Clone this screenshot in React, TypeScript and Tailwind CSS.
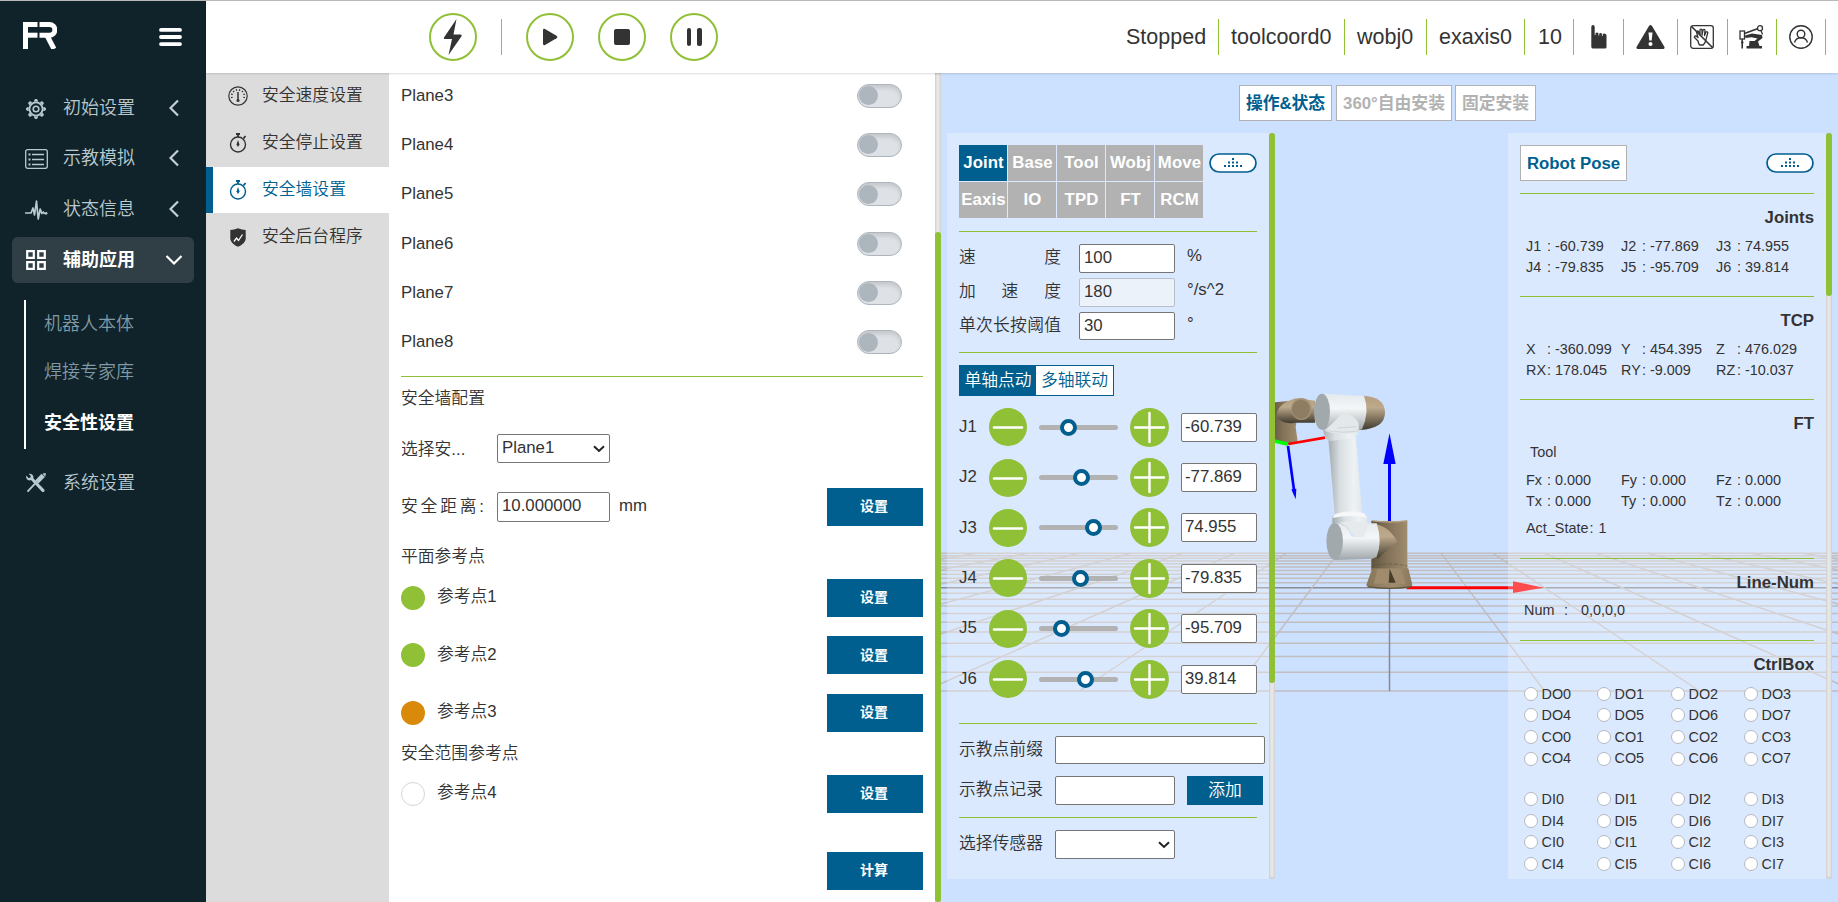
import React from "react";

const menuText = "text-[18px] leading-none";

function Gear() {
  return (
    <svg width="20" height="20" viewBox="0 0 20 20" fill="none" stroke="#b9c9d0">
      <circle cx="10" cy="10" r="6.6" strokeWidth="1.9" />
      <circle cx="10" cy="10" r="2.8" strokeWidth="1.6" />
      {[0, 45, 90, 135, 180, 225, 270, 315].map((a) => (
        <path key={a} d="M8.4 2.6 L9 .6 H11 L11.6 2.6" fill="#b9c9d0" strokeWidth="1" transform={`rotate(${a} 10 10)`} />
      ))}
    </svg>
  );
}
function ListIcon() {
  return (
    <svg width="23" height="20" viewBox="0 0 23 20" fill="none" stroke="#b9c9d0" strokeWidth="1.3">
      <rect x=".7" y=".7" width="21.6" height="18.6" rx="2" />
      <path d="M7 5.5h12M7 10.500h12M7 15.500h12" />
      <path d="M3.5 5.5h2M3.5 10.500h2M3.5 15.500h2" strokeWidth="2" />
    </svg>
  );
}
function Pulse() {
  return (
    <svg width="23" height="20" viewBox="0 0 23 20" fill="none" stroke="#b9c9d0" strokeWidth="1.7" strokeLinejoin="round">
      <path d="M0 13h6l2-5 1.5 7L11.5 1l1.7 18 2-10 1.6 4.5 1.5-1.5 1 1.5H22" />
      <circle cx="21.2" cy="13.3" r="1.2" fill="#b9c9d0" stroke="none" />
    </svg>
  );
}
function Squares() {
  return (
    <svg width="20" height="20" viewBox="0 0 20 20" fill="none" stroke="#fff" strokeWidth="2.200">
      <path d="M1.200 1.200h6.600v6.600H1.200zM12.200 1.200h6.600v6.600h-6.600zM1.200 12.200h6.600v6.600H1.200zM12.200 12.200h6.600v6.600h-6.600z" />
    </svg>
  );
}
function Tools() {
  return (
    <svg width="20" height="20" viewBox="0 0 20 20" fill="none" stroke="#b9c9d0">
      <path d="M.3 2.500c-.5 2 .2 3.600 1.500 4.400 1 .6 2.200.6 3.200.2L16 18.800c1.400 1 3.200-.6 2.300-2.200L7.300 5.300C7.700 3.800 7.200 2.300 6 1.400 5 .7 3.800.6 2.800 1l2 2-.5 1.700-1.800.4z" fill="#b9c9d0" stroke="none" />
      <path d="M1.500 18.700l7.500-8" strokeWidth="1.900" />
      <path d="M10.800 9l6.400-6.700" strokeWidth="4.600" />
      <path d="M17 .8l2.500-.5-.4 3z" fill="#b9c9d0" strokeWidth=".6" />
    </svg>
  );
}
function Chev({ down = false }: { down?: boolean }) {
  return down ? (
    <svg width="18" height="12" viewBox="0 0 18 12" fill="none" stroke="#fff" strokeWidth="2.200">
      <path d="M1.500 2l7.500 7.500L16.500 2" />
    </svg>
  ) : (
    <svg width="10" height="18" viewBox="0 0 10 18" fill="none" stroke="#c3d0d6" strokeWidth="2.200">
      <path d="M9 1.500L1.500 9 9 16.500" />
    </svg>
  );
}

function Sidebar() {
  const top = [
    { t: "初始设置", i: <Gear /> },
    { t: "示教模拟", i: <ListIcon /> },
    { t: "状态信息", i: <Pulse /> },
  ];
  return (
    <aside className="flex h-full w-[206px] shrink-0 flex-col bg-[#10232a]">
      <div className="flex h-[85px] items-start pl-[23px] pt-[21px]">
        <svg width="34" height="27" viewBox="0 0 34 27" fill="none" stroke="#fff" strokeWidth="5">
          <path d="M2.500 27V2.500H14.500" />
          <path d="M4.500 13.200H14.500" />
          <path d="M16.500 2.500H26.500a5.300 5.300 0 0 1 0 10.700H16.500" />
          <path d="M24 13.500L31 27" />
          <path d="M5 8.200H28" stroke="#10232a" strokeWidth=".8" />
        </svg>
        <svg className="ml-[102px] mt-[6px]" width="23" height="18" viewBox="0 0 23 18" stroke="#fff" strokeWidth="3.800" strokeLinecap="round">
          <path d="M2 1.900h19M2 9h19M2 16.100h19" />
        </svg>
      </div>
      {top.map((m) => (
        <div key={m.t} className="mx-3 flex h-[50.400px] items-start text-[#b9c9d0]">
          <div className="flex h-[46px] w-full items-center pl-3">
            <span className="flex w-6 justify-center">{m.i}</span>
            <span className={`${menuText} -mt-[2px] ml-[15px] w-[100px]`}>{m.t}</span>
            <span className="ml-[6px] -mt-[2px]"><Chev /></span>
          </div>
        </div>
      ))}
      <div className="mx-3 flex h-[46px] items-center rounded-md bg-[#303f45] pl-3 font-bold text-white">
        <span className="flex w-6 justify-center"><Squares /></span>
        <span className={`${menuText} -mt-px ml-[15px] w-[100px]`}>辅助应用</span>
        <span className="-mt-px ml-[2px]"><Chev down /></span>
      </div>
      <div className="ml-6 mt-[17px] flex h-[149px] flex-col border-l-2 border-white pl-[18px] text-[#7f99a5]">
        <span className={`${menuText} flex h-[47px] items-center`}>机器人本体</span>
        <span className={`${menuText} flex h-[50px] items-center`}>焊接专家库</span>
        <span className={`${menuText} flex h-[51px] items-center font-bold text-white`}>安全性设置</span>
      </div>
      <div className="mx-3 mt-[11px] flex h-[46px] items-center pl-3 text-[#b9c9d0]">
        <span className="flex w-6 justify-center"><Tools /></span>
        <span className={`${menuText} ml-[15px]`}>系统设置</span>
      </div>
    </aside>
  );
}

function RoundBtn({ children }: { children: React.ReactNode }) {
  return <button className="flex size-12 items-center justify-center rounded-full border-2 border-[#8fc036]">{children}</button>;
}

function Header() {
  const cell = "flex h-9 items-center border-r border-[#8fc036]";
  return (
    <header className="relative z-10 flex h-[72px] shrink-0 items-start bg-white shadow-[0_1px_2px_rgba(0,0,0,0.14)]">
      <div className="flex items-center pl-[223px] pt-3">
        <RoundBtn>
          <svg width="20" height="36" viewBox="0 0 20 36" fill="#333"><path d="M13.500 0L1 18.500q-.8 1.500 1 1.500h7L5.500 36 18.500 17.200q.8-1.700-1-1.700H10.500z" /></svg>
        </RoundBtn>
        <div className="mx-6 h-9 w-px bg-[#8fc036]" />
        <div className="flex gap-6">
          <RoundBtn>
            <svg width="16" height="18" viewBox="0 0 16 18" fill="#333"><path d="M1 2.200Q1 .2 3 1L14.500 7.800q1.700 1.200 0 2.400L3 17q-2 .8-2-1.200z" /></svg>
          </RoundBtn>
          <RoundBtn><span className="h-4 w-4 rounded-[2px] bg-[#333]" /></RoundBtn>
          <RoundBtn><span className="flex gap-[6px]"><i className="h-[18px] w-[4.500px] rounded-[2px] bg-[#333]" /><i className="h-[18px] w-[4.500px] rounded-[2px] bg-[#333]" /></span></RoundBtn>
        </div>
      </div>
      <div className="ml-auto mr-[12px] flex pt-[18px] text-[21.500px] leading-none text-[#333]">
        <span className={`${cell} w-[104px] pl-[11px] pt-px`}>Stopped</span>
        <span className={`${cell} w-[126px] pl-3 pt-px`}>toolcoord0</span>
        <span className={`${cell} w-[82px] pl-3 pt-px`}>wobj0</span>
        <span className={`${cell} w-[98px] pl-3 pt-px`}>exaxis0</span>
        <span className={`${cell} w-[49px] pl-[13px] pt-px`}>10</span>
        <span className={`${cell} w-[50px] pl-[17px]`}>
          <svg width="16" height="24" viewBox="0 0 16 24" fill="#333">
            <path d="M.3 2q0-2 1.700-2t1.700 2v8h.8V8q1.500-1 2.900 0v2.500h.8V8.500q1.400-1 2.700 0v2.500h.8V9q1.500-1 3 0 .8.700.8 1.500V22q0 1.500-1.500 1.500h-12q-1.500 0-1.700-1.500z" />
          </svg>
        </span>
        <span className={`${cell} w-[54px] justify-center`}>
          <svg width="29" height="24" viewBox="0 0 29 24" fill="#333">
            <path d="M14.500 0q.9 0 1.500 1L28.500 22q.5 1.700-1 2h-26q-1.500-.3-1-2L13 1q.6-1 1.500-1z" />
            <path d="M12.500 7.500h4l-.8 8h-2.400z" fill="#fff" /><circle cx="14.500" cy="19" r="2" fill="#fff" />
          </svg>
        </span>
        <span className={`${cell} w-[50px] justify-center pr-px`}>
          <svg width="24" height="24" viewBox="0 0 24 24" fill="none" stroke="#333" strokeWidth="1.300" strokeLinecap="round" strokeLinejoin="round">
            <rect x=".7" y=".7" width="22.600" height="22.600" rx="2.500" />
            <path d="M8 16L4.500 12.500q-.4-1.700 1.500-1.500l2 1.600L6.500 7q.5-1.600 2-.6L10 10V4.800q1-1.500 2 0V10l1-5q1.200-1.300 2 .2L14.500 10.500l1.500-3.500q1.500-.8 1.800.7l-1.600 6q-.5 4-3 6.300H9.500q-1-1.500-1.500-4z" />
            <path d="M1.500 1.500l21 21" strokeWidth="1.600" />
          </svg>
        </span>
        <span className={`${cell} w-[49px] justify-center pr-px`}>
          <svg width="25" height="24" viewBox="0 0 25 24" fill="none" stroke="#333">
            <rect x="1" y="6" width="4.500" height="8" strokeWidth="1.300" />
            <path d="M3.200 14v9.500M2 17.500h2.500" strokeWidth="1.600" />
            <path d="M5.500 8.500L19 3.500" strokeWidth="1.500" />
            <circle cx="21" cy="3.200" r="2.500" strokeWidth="1.300" /><path d="M22 5.500l1.500 4" strokeWidth="1.300" />
            <path d="M6 10.500l7-2 10 1.500.5 3L19 16.500l1.500 4.500h2.500v2.500H7.500V21H10l.5-5h5l3-2.500-6-1.300-6 .8z" fill="#333" stroke="none" />
          </svg>
        </span>
        <span className={`${cell} w-[49px] justify-center`}>
          <svg width="24" height="24" viewBox="0 0 24 24" fill="none" stroke="#333" strokeWidth="1.400">
            <circle cx="12" cy="12" r="11.200" /><circle cx="12" cy="9" r="3.800" /><path d="M5.500 17.500q1.500-4.700 6.500-4.700t6.500 4.700" />
          </svg>
        </span>
      </div>
    </header>
  );
}

function Stopwatch({ c }: { c: string }) {
  return (
    <svg width="18" height="20" viewBox="0 0 18 20" fill="none" stroke={c} strokeWidth="1.400">
      <circle cx="9" cy="11.500" r="7.500" />
      <path d="M9 1v3M7 1h4M14.500 5.500L16.500 3" strokeWidth="1.800" />
      <path d="M9 7l1.500 4.500L9 14l-1.500-2.500z" fill={c} stroke="none" />
    </svg>
  );
}
function Gauge() {
  return (
    <svg width="20" height="20" viewBox="0 0 20 20" fill="none" stroke="#333" strokeWidth="1.200">
      <circle cx="10" cy="10" r="9.200" />
      <path d="M4 12a6.300 6.300 0 1 1 12 0" strokeWidth="1.700" strokeDasharray="1.200 2" />
      <path d="M10 6v8" strokeWidth="1.500" /><circle cx="10" cy="14.500" r="1.500" fill="#333" stroke="none" />
    </svg>
  );
}
function Shield() {
  return (
    <svg width="16" height="19" viewBox="0 0 16 19">
      <path d="M8 .3Q12 2 15.700 2v9Q15 16 8 18.700 1 16 .3 11V2Q4 2 8 .3z" fill="#333" />
      <path d="M4 13.500l2.500-3.500 2 2.500L12.500 6.500" stroke="#fff" strokeWidth="1.300" fill="none" />
    </svg>
  );
}

function SubMenu() {
  const items = [
    { t: "安全速度设置", i: <Gauge /> },
    { t: "安全停止设置", i: <Stopwatch c="#333" /> },
    { t: "安全墙设置", i: <Stopwatch c="#005f8e" />, on: true },
    { t: "安全后台程序", i: <Shield /> },
  ];
  return (
    <nav className="flex w-[183px] shrink-0 flex-col gap-px bg-[#dcdcdc] text-[16.800px] leading-none text-[#333]">
      {items.map((m) => (
        <div key={m.t} className={m.on ? "flex h-[46px] items-center border-l-[7px] border-[#005f8e] bg-white text-[#005f8e]" : "flex h-[46px] items-center border-l-[7px] border-transparent"}>
          <span className="ml-[13px] flex w-6 justify-center">{m.i}</span>
          <span className="ml-3">{m.t}</span>
        </div>
      ))}
    </nav>
  );
}

function Action({ label }: { label: string }) {
  return <button className="ml-auto h-[38px] w-24 bg-[#005f8e] pb-px pr-[2px] text-[14px] font-bold leading-none text-white">{label}</button>;
}

const field = "rounded-[2px] border border-[#767676] bg-white leading-none outline-none";

function Picker({ value, size }: { value: string; size: string }) {
  return (
    <span className={`relative flex h-[29px] shrink-0 ${size}`}>
      <select className={`${field} h-full w-full appearance-none pl-1`} defaultValue={value}>
        <option>{value}</option>
      </select>
      <svg className="pointer-events-none absolute right-[5px] top-[11px]" width="12" height="8" viewBox="0 0 12 8" fill="none" stroke="#222" strokeWidth="2">
        <path d="M1 1.300l5 4.700 5-4.700" />
      </svg>
    </span>
  );
}

function RefRow({ n, color }: { n: number; color: string }) {
  return (
    <div className="flex h-[42px] items-center">
      <span className={`size-6 rounded-full ${color}`} />
      <span className="ml-3">参考点{n}</span>
      <Action label="设置" />
    </div>
  );
}

function WallPanel() {
  return (
    <section className="flex w-[552px] shrink-0 overflow-hidden bg-white text-[16.800px] leading-none text-[#333]">
      <div className="flex w-[546px] flex-col pl-3 pr-3">
        <div className="-mt-[2px] flex flex-col">
          {[3, 4, 5, 6, 7, 8].map((n) => (
            <div key={n} className="flex h-[49.300px] shrink-0 items-center justify-between pr-[21px]">
              <span className="mt-px">Plane{n}</span>
              <span className="flex h-6 w-[45px] items-center rounded-full border border-[#adb5bd] bg-[#dee2e6] pl-px shadow-[inset_0_3px_4px_rgba(0,0,0,0.12)]">
                <i className="size-[19px] rounded-full bg-[#adb5bd]" />
              </span>
            </div>
          ))}
        </div>
        <div className="mt-[9px] h-px shrink-0 bg-[#8fc036]" />
        <div className="flex h-[42px] items-center pt-[3px]">安全墙配置</div>
        <div className="flex h-[60px] items-center">
          <span className="mt-[3px] w-24">选择安...</span>
          <Picker value="Plane1" size="w-[113px]" />
        </div>
        <div className="flex h-[56px] items-center">
          <span className="mt-px w-24 tracking-[2.800px]">安全距离:</span>
          <input className={`${field} h-[30px] w-[113px] pb-px pl-1`} defaultValue="10.000000" />
          <span className="-mt-px ml-[9px]">mm</span>
          <Action label="设置" />
        </div>
        <div className="flex h-[42px] items-center pt-[3px]">平面参考点</div>
        <div className="flex flex-col gap-[15.500px]">
          <RefRow n={1} color="bg-[#8fc036]" />
          <RefRow n={2} color="bg-[#8fc036]" />
          <RefRow n={3} color="bg-[#d98a0b]" />
        </div>
        <div className="flex h-[39px] items-center pt-[3px]">安全范围参考点</div>
        <RefRow n={4} color="border border-[#d6d6d6] bg-white" />
        <div className="mt-[37px] flex"><Action label="计算" /></div>
      </div>
      <div className="flex w-[6px] flex-col bg-[#e9e9e9] shadow-[inset_0_0_3px_rgba(0,0,0,0.25)]">
        <div className="mt-[159px] flex-1 rounded-[3px] bg-[#8fc036]" />
      </div>
    </section>
  );
}

const CX = 1389.5;
const HY = 484.4;
function Scene() {
  const idx = Array.from({ length: 21 }, (_, i) => i - 10);
  return (
    <svg className="absolute inset-0" width="897" height="829" viewBox="941 73 897 829">
      <defs>
        <linearGradient id="wv" x1="0" y1="0" x2="0" y2="1"><stop offset="0" stopColor="#e4e9ec" /><stop offset=".4" stopColor="#f4f7f8" /><stop offset="1" stopColor="#9fa6aa" /></linearGradient>
        <linearGradient id="wh" x1="0" y1="0" x2="1" y2="0"><stop offset="0" stopColor="#a4abaf" /><stop offset=".35" stopColor="#d9dfe2" /><stop offset=".75" stopColor="#eef2f4" /><stop offset="1" stopColor="#e2e7ea" /></linearGradient>
        <linearGradient id="bv" x1="0" y1="0" x2="0" y2="1"><stop offset="0" stopColor="#b59f80" /><stop offset=".35" stopColor="#bda98b" /><stop offset="1" stopColor="#3f3a2e" /></linearGradient>
        <linearGradient id="bh" x1="0" y1="0" x2="1" y2="0"><stop offset="0" stopColor="#5f543f" /><stop offset=".5" stopColor="#85745a" /><stop offset="1" stopColor="#a08c6e" /></linearGradient>
        <linearGradient id="cone" x1="0" y1="0" x2="1" y2="0"><stop offset="0" stopColor="#877559" /><stop offset=".6" stopColor="#a08b6c" /><stop offset="1" stopColor="#8a795e" /></linearGradient>
      </defs>
      <g stroke="#c2bebf" strokeWidth="1.500">
        {idx.map((n) => {
          const y = HY + (103.3 * 20) / (20 - n);
          return <line key={`h${n}`} x1={CX - (77.5 * 200) / (20 - n)} x2={CX + (77.5 * 200) / (20 - n)} y1={y} y2={y} stroke={n === 0 ? "#8a8a90" : undefined} />;
        })}
        {idx.map((k) => (
          <line key={`v${k}`} x1={CX + k * 51.67} x2={CX + k * 155} y1={HY + 68.87} y2={HY + 206.6} stroke={k === 0 ? "#8a8a90" : undefined} />
        ))}
      </g>
      <g transform="translate(1260 370) scale(.33333)">
        <path d="M440 653H762" stroke="#f00" strokeWidth="9" />
        <path d="M759 634L852 653 759 669z" fill="#f00" />
        <path d="M388.500 455V275" stroke="#00f" strokeWidth="9" />
        <path d="M388.500 190L407 282H370z" fill="#00f" />
        {/* wrist */}
        <path d="M30 98L85 93 110 150 107 172 113 214 75 226 40 210z" fill="url(#bh)" />
        <path d="M108 85L165 92V158L105 158Q70 165 50 140 50 100 108 85z" fill="url(#bv)" />
        <ellipse cx="124" cy="117" rx="31" ry="33" fill="#a69375" />
        <ellipse cx="123" cy="118" rx="27" ry="29" fill="#8e7d62" />
        <path d="M40 212L85 223" stroke="#0f0" strokeWidth="11" />
        <path d="M85 222L195 203" stroke="#f00" strokeWidth="8" />
        <path d="M84 228L102 360" stroke="#00f" strokeWidth="8" />
        <path d="M94 358L109 356 107 388z" fill="#00f" />
        {/* elbow */}
        <path d="M308 77Q375 80 375 128 375 175 300 180z" fill="url(#bv)" />
        <path d="M205 205L287 195 307 440 225 440z" fill="url(#wh)" />
        <path d="M185 160H297L293 196Q250 214 205 212 190 195 189 180z" fill="url(#wh)" />
        <path d="M188 71L312 78Q330 125 306 178L290 182Q255 120 225 165L188 180z" fill="url(#wv)" />
        <path d="M228 150Q258 108 296 158L296 185Q250 200 193 182z" fill="#e3e8eb" />
        <path d="M192 180Q250 192 296 182M232 174L290 170" stroke="#c2c9cd" strokeWidth="2" fill="none" />
        <ellipse cx="186" cy="125" rx="24" ry="54" fill="#a2a9ad" />
        {/* base */}
        <path d="M334 453H442V600H334z" fill="url(#bh)" />
        <path d="M337 595H445L457 645Q450 657 388 657 325 657 319 645z" fill="url(#cone)" />
        <path d="M334 588Q388 576 442 588" stroke="#5f543f" strokeWidth="2" strokeDasharray="12 5" fill="none" />
        <path d="M335 452Q388 460 442 452" stroke="#b7a382" strokeWidth="4" fill="none" />
        <path d="M352 598H422L437 641H342z" fill="#a08b6c" />
        <path d="M389 596L407 638H386z" fill="#453d2c" />
        <path d="M323 650Q388 660 455 650" stroke="#5f543f" strokeWidth="4" fill="none" />
        {/* shoulder */}
        <path d="M340 462Q385 465 412 515 385 535 352 568z" fill="url(#bv)" />
        <path d="M217 440Q265 420 321 437L323 470 290 500 217 460z" fill="url(#wh)" />
        <path d="M226 432Q270 417 313 430L322 443Q270 432 217 444z" fill="#f5f7f8" />
        <path d="M224 458Q260 462 275 500 300 500 320 460H350Q368 515 350 560L335 567 224 570z" fill="url(#wv)" />
        <path d="M236 458Q280 466 280 502L312 502 322 470 321 460Q280 450 236 458z" fill="#e6eaed" />
        <ellipse cx="224" cy="514" rx="25" ry="55" fill="#a2a9ad" />
      </g>
    </svg>
  );
}

function DotsPill() {
  return (
    <svg width="48" height="20" viewBox="0 0 48 20">
      <rect x="1" y="1" width="46" height="18" rx="9" fill="#fff" stroke="#005f8e" strokeWidth="1.700" />
      <g fill="#005f8e">
        <rect x="23" y="5" width="2" height="2" />
        {[19, 23, 27].map((x) => <rect key={x} x={x} y="8.500" width="2" height="2" />)}
        {[15, 19, 23, 27, 31].map((x) => <rect key={x} x={x} y="12" width="2" height="2" />)}
      </g>
    </svg>
  );
}

const rule = "h-px shrink-0 bg-[#8fc036]";

function Label({ text }: { text: string }) {
  return <span className="flex w-[102px] justify-between">{[...text].map((c, i) => <span key={i}>{c}</span>)}</span>;
}

function JogPanel() {
  const tabs = ["Joint", "Base", "Tool", "Wobj", "Move", "Eaxis", "IO", "TPD", "FT", "RCM"];
  const joints = [
    { n: "J1", v: "-60.739", o: 29 },
    { n: "J2", v: "-77.869", o: 42 },
    { n: "J3", v: "74.955", o: 54.3 },
    { n: "J4", v: "-79.835", o: 41.3 },
    { n: "J5", v: "-95.709", o: 22.3 },
    { n: "J6", v: "39.814", o: 46.3 },
  ];
  return (
    <div className="flex h-[746px] w-[328px] text-[16.800px] leading-none text-[#333]">
      <div className="flex w-[322px] flex-col bg-white/30 pl-3 pr-3 pt-3">
        <div className="flex items-start">
          <div className="grid w-[244px] grid-cols-5 gap-px">
            {tabs.map((t, i) => (
              <button key={t} className={`flex h-9 min-w-0 items-center justify-center pl-px font-bold tracking-[0.1px] text-white ${i === 0 ? "bg-[#005f8e]" : "bg-[#b2b2b2]"}`}>{t}</button>
            ))}
          </div>
          <span className="ml-[6px] mt-2 shrink-0"><DotsPill /></span>
        </div>
        <div className={`mt-[13px] ${rule}`} />
        <div className="mt-3 flex flex-col gap-[5px]">
          {[["速度", "100", "%"], ["加速度", "180", "°/s^2"], ["单次长按阈值", "30", "°"]].map(([l, v, u], i) => (
            <div key={l} className={`flex items-center ${i === 2 ? "h-7" : "h-[29px]"}`}>
              <Label text={l} />
              <input className={i === 1 ? "ml-[18px] h-full w-24 rounded-[2px] border border-[#b7bfcb] bg-[#ecf2fa] pl-1 pb-px leading-none" : `${field} ml-[18px] h-full w-24 pb-px pl-1`} defaultValue={v} readOnly={i === 1} />
              <span className="-mt-1 ml-3">{u}</span>
            </div>
          ))}
        </div>
        <div className={`mt-3 ${rule}`} />
        <div className="mt-3 flex h-[31px] w-[155px] shrink-0 border border-[#005f8e] bg-white">
          <span className="flex w-[76px] items-center justify-center bg-[#005f8e] pt-px text-white">单轴点动</span>
          <span className="flex flex-1 items-center justify-center pt-px text-[#005f8e]">多轴联动</span>
        </div>
        <div className="mt-[6px] flex flex-col">
          {joints.map((j) => (
            <div key={j.n} className="flex h-[50.400px] items-center">
              <span className="w-[30px]">{j.n}</span>
              <svg width="38" height="38" viewBox="0 0 38 38"><circle cx="19" cy="19" r="19" fill="#8fc036" /><path d="M5 19.500h28" stroke="#fff" strokeWidth="2.400" strokeLinecap="round" /></svg>
              <div className="relative ml-3 h-[5px] w-[79px] rounded-full bg-[#b2b2b2]">
                <span className="absolute -top-[6px] size-[17px] rounded-full border-4 border-[#005f8e] bg-white" style={{ left: j.o - 8.5 }} />
              </div>
              <svg className="ml-3" width="39" height="39" viewBox="0 0 39 39"><circle cx="19.500" cy="19.500" r="19.400" fill="#8fc036" /><path d="M5 19.500h29M19.500 5v29" stroke="#fff" strokeWidth="2.400" strokeLinecap="round" /></svg>
              <input className={`${field} ml-3 h-[29px] w-[76px] pb-px pl-[3px]`} defaultValue={j.v} />
            </div>
          ))}
        </div>
        <div className={`mt-[19px] ${rule}`} />
        <div className="mt-3 flex items-center">
          <span className="w-24 shrink-0">示教点前缀</span>
          <input className={`${field} -mr-2 h-7 w-[210px] shrink-0`} />
        </div>
        <div className="mt-3 flex items-center">
          <span className="w-24 shrink-0">示教点记录</span>
          <input className={`${field} h-[29px] w-[120px] shrink-0`} />
          <button className="-mr-2 ml-3 h-[29px] w-[76px] shrink-0 bg-[#005f8e] pt-px text-white">添加</button>
        </div>
        <div className={`mt-3 ${rule}`} />
        <div className="mt-3 flex items-center">
          <span className="w-24 shrink-0">选择传感器</span>
          <Picker value="" size="w-[120px]" />
        </div>
      </div>
      <div className="w-[6px] rounded-[3px] bg-[#e9e9e9] shadow-[inset_0_0_3px_rgba(0,0,0,0.25)]">
        <div className="h-[550px] rounded-[3px] bg-[#8fc036]" />
      </div>
    </div>
  );
}

function Values({ rows }: { rows: string[][][] }) {
  return (
    <>
      {rows.map((r, i) => (
        <div key={i} className="ml-[6px] flex h-[20.500px] items-center">
          {r.map(([k, v]) => (
            <span key={k} className="flex w-[95px]">
              <span className="w-[21px]">{k}</span>
              <span className="w-[8px]">:</span>
              <span>{v}</span>
            </span>
          ))}
        </div>
      ))}
    </>
  );
}

function Title({ children }: { children: React.ReactNode }) {
  return <h3 className="flex h-[46px] shrink-0 items-center justify-end pt-[2px] text-[16.800px] font-bold">{children}</h3>;
}

function IoGrid({ names }: { names: string[] }) {
  const signals = names.flatMap((p) => [0, 1, 2, 3, 4, 5, 6, 7].map((n) => p + n));
  return (
    <div className="ml-1 grid grid-cols-[73px_74px_73px_1fr]">
      {signals.map((t) => (
        <span key={t} className="flex h-[21.600px] items-center">
          <i className="size-[14px] rounded-full border border-[#b5b9c0] bg-white" />
          <span className="ml-[3.500px]">{t}</span>
        </span>
      ))}
    </div>
  );
}

function PosePanel() {
  return (
    <div className="flex h-[746px] w-[324px] text-[14.400px] leading-none text-[#333]">
      <div className="flex w-[318px] flex-col bg-white/30 pl-3 pr-3 pt-3">
        <div className="flex items-start justify-between">
          <span className="flex h-9 w-[107px] items-center justify-center border border-[#b2b2b2] bg-white pt-[2px] text-[16.800px] font-bold text-[#005f8e]">Robot Pose</span>
          <span className="mt-2"><DotsPill /></span>
        </div>
        <div className={`mt-3 ${rule}`} />
        <Title>Joints</Title>
        <div className="h-[56px]">
          <div className="-mt-1">
            <Values rows={[[["J1", "-60.739"], ["J2", "-77.869"], ["J3", "74.955"]], [["J4", "-79.835"], ["J5", "-95.709"], ["J6", "39.814"]]]} />
          </div>
        </div>
        <div className={rule} />
        <Title>TCP</Title>
        <div className="h-[56px]">
          <div className="-mt-1">
            <Values rows={[[["X", "-360.099"], ["Y", "454.395"], ["Z", "476.029"]], [["RX", "178.045"], ["RY", "-9.009"], ["RZ", "-10.037"]]]} />
          </div>
        </div>
        <div className={rule} />
        <Title>FT</Title>
        <div className="flex h-[112px] flex-col">
          <span className="ml-[10px] flex h-[12px] items-center">Tool</span>
          <div className="mt-[12px]">
            <Values rows={[[["Fx", "0.000"], ["Fy", "0.000"], ["Fz", "0.000"]], [["Tx", "0.000"], ["Ty", "0.000"], ["Tz", "0.000"]]]} />
          </div>
          <span className="ml-[6px] mt-[9px] flex h-[16px] items-center">Act_State<span className="ml-px mr-[5px]">:</span>1</span>
        </div>
        <div className={rule} />
        <Title>Line-Num</Title>
        <div className="ml-1 flex h-[35px] items-start">
          <span className="-mt-[2px] w-10">Num</span><span className="-mt-[2px] w-[17px]">:</span><span className="-mt-[2px]">0,0,0,0</span>
        </div>
        <div className={rule} />
        <Title>CtrlBox</Title>
        <div className="-mt-[4px]"><IoGrid names={["DO", "CO"]} /></div>
        <div className="mt-[19px]"><IoGrid names={["DI", "CI"]} /></div>
      </div>
      <div className="w-[6px] rounded-[3px] bg-[#e9e9e9] shadow-[inset_0_0_3px_rgba(0,0,0,0.25)]">
        <div className="h-[163px] rounded-[3px] bg-[#8fc036]" />
      </div>
    </div>
  );
}

export default function App() {
  const mode = "flex h-9 items-center justify-center border border-[#b2b2b2] bg-white pt-[2px] text-[16.800px] font-bold leading-none";
  return (
    <div className="flex h-[902px] w-[1838px] overflow-hidden border-t border-[#b8b8b8] bg-white font-['Liberation_Sans','Noto_Sans_CJK_SC',sans-serif] font-[350]">
      <Sidebar />
      <div className="flex flex-1 flex-col">
        <Header />
        <div className="flex min-h-0 flex-1">
          <SubMenu />
          <WallPanel />
          <main className="relative flex-1 overflow-hidden bg-[#cce0ff]">
            <Scene />
            <div className="relative flex flex-col">
              <div className="flex pl-[298px] pt-3">
                <button className={`${mode} w-[93px] text-[#005f8e]`}>操作&amp;状态</button>
                <button className={`${mode} ml-1 w-[116px] text-[#b2b2b2]`}>360°自由安装</button>
                <button className={`${mode} ml-[3px] w-[81px] text-[#b2b2b2]`}>固定安装</button>
              </div>
              <div className="mt-3 flex justify-between px-[6px]">
                <JogPanel />
                <PosePanel />
              </div>
            </div>
          </main>
        </div>
      </div>
    </div>
  );
}
